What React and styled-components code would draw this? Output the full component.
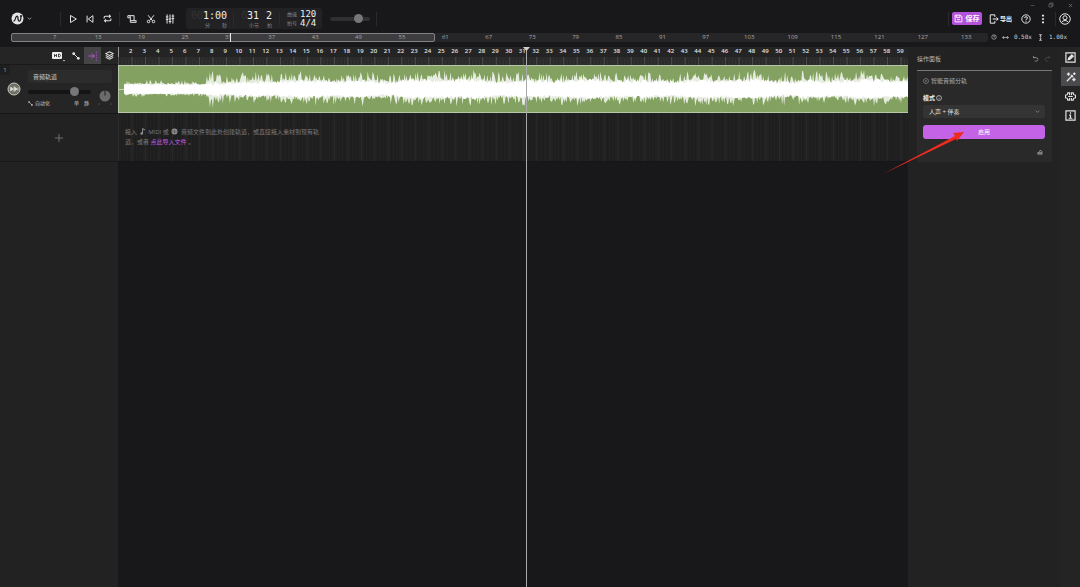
import React from "react";
import styled, { createGlobalStyle } from "styled-components";

const GlobalStyle = createGlobalStyle`
    * {
        box-sizing: border-box;
    }

    body {
        margin: 0;
        background: #18181a;
        color: #d8d8d8;
        font-family: "Open Sans", "Noto Sans CJK SC", sans-serif;
        font-size: 6px;
        line-height: 10px;
    }

    button, input, select {
        margin: 0;
        padding: 0;
        border: 0;
        background: none;
        color: inherit;
        font: inherit;
    }

    svg {
        display: block;
        flex: none;
    }
`;

const Page = styled.div`
    min-height: 100vh;
    display: flex;
    flex-direction: column;
    overflow: hidden;
`;

const TopBar = styled.header`
    height: 47px;
    flex: none;
`;

const WindowBar = styled.div`
    height: 8px;
    display: flex;
    justify-content: flex-end;
    gap: 9px;
    padding: 0 5px;
`;

const IconButton = styled.button`
    width: ${(props) => props.$width || 10}px;
    height: ${(props) => props.$height || 10}px;
    display: flex;
    flex: none;
    align-items: center;
    justify-content: center;
    color: ${(props) => props.$color || "#e4e4e4"};
    background: ${(props) => props.$bg || "none"};
`;

const Toolbar = styled.div`
    height: 21px;
    display: flex;
    align-items: center;
    justify-content: space-between;
    padding: 0 9px 0 11px;
`;

const Group = styled.div`
    display: flex;
    align-items: center;
    gap: ${(props) => props.$gap || 0}px;
    padding-left: ${(props) => props.$left || 0}px;
`;

const Divider = styled.span`
    width: 1px;
    height: 14px;
    background: #2b2b2d;
`;

const Readout = styled.div`
    height: 21px;
    display: flex;
    align-items: center;
    margin-left: 11px;
    padding: 0 5px;
    border-radius: 3px;
    background: #222224;
`;

const Time = styled.div`
    width: ${(props) => props.$width}px;
    display: flex;
    flex-direction: column;
    color: #f0f0f0;
    font-family: "DejaVu Sans Mono", monospace;
    font-size: 10px;
    line-height: 11px;
    text-align: right;

    i {
        color: #343436;
        font-style: normal;
    }
`;

const Units = styled.div`
    display: flex;
    justify-content: flex-end;
    gap: ${(props) => props.$gap || 0}px;
    color: #8a8a8c;
    font-family: "Noto Sans CJK SC", sans-serif;
    font-size: 5px;
    line-height: 7px;
`;

const Meter = styled.div`
    display: grid;
    grid-template-columns: 10px 17px;
    column-gap: 3px;
    align-items: center;
    color: #f0f0f0;
    font-family: "DejaVu Sans Mono", "Noto Sans CJK SC", monospace;
    font-size: 9px;
    line-height: 9px;

    span {
        color: #8a8a8c;
        font-size: 5px;
    }
`;

const Slider = styled.input.attrs({ type: "range" })`
    width: ${(props) => props.$width}px;
    height: 10px;
    display: block;
    flex: none;
    appearance: none;

    &::-webkit-slider-runnable-track {
        height: 4px;
        border-radius: 2px;
        background: ${(props) => props.$track || "#303032"};
    }

    &::-webkit-slider-thumb {
        width: 9px;
        height: 9px;
        margin-top: -3px;
        appearance: none;
        border-radius: 50%;
        background: #777779;
    }
`;

const SaveButton = styled.button`
    width: 30px;
    height: 13px;
    display: flex;
    align-items: center;
    justify-content: center;
    gap: 2px;
    border-radius: 2px;
    background: #b552dc;
    color: #fff;
    font-size: 7px;
    font-weight: 700;
`;

const ExportButton = styled.button`
    display: flex;
    align-items: center;
    gap: 1px;
    color: #f0f0f0;
    font-size: 6px;
    font-weight: 700;
`;

const OverviewRow = styled.div`
    display: flex;
    align-items: center;
    padding: 3px 13px 0 11px;
`;

const Overview = styled.div`
    position: relative;
    height: 9px;
    flex: 1;
    display: flex;
    padding-left: 22px;
    border-radius: 2px;
    background: #262628;
    color: #a6a6a8;
    line-height: 9px;

    span {
        position: relative;
        flex: 1;
        text-align: center;
    }
`;

const ViewRange = styled.div`
    position: absolute;
    inset: 0 auto 0 0;
    width: 43.4%;
    border: 1px solid #838385;
    border-radius: 2px;
    background: #3d3d3f;
`;

const OverviewMark = styled.div`
    position: absolute;
    top: 0;
    bottom: 0;
    left: 22.4%;
    width: 1px;
    background: #e8e8e8;
`;

const Scale = styled.div`
    display: flex;
    align-items: center;
    gap: 5px;
    padding-left: 3px;
    color: #d0d0d2;
    font-family: "DejaVu Sans Mono", monospace;
`;

const Workspace = styled.main`
    flex: 1;
    display: flex;
`;

const Tracks = styled.aside`
    width: 118px;
    flex: none;
    background: #222222;
`;

const TrackTools = styled.div`
    height: 18px;
    display: flex;
    align-items: center;
    justify-content: flex-end;
    border-bottom: 1px solid #191919;
    background: #252526;
`;

const Track = styled.div`
    height: 49px;
    display: flex;
    border-bottom: 1px solid #171717;
    background: #252525;
`;

const TrackIndex = styled.div`
    width: 28px;
    display: flex;
    flex-direction: column;
    gap: 7px;
    color: #a0a0a0;

    span {
        width: 10px;
        text-align: center;
        background: #1f1f1f;
    }

    svg {
        margin-left: 7px;
    }
`;

const TrackBody = styled.div`
    flex: 1;
    padding: 5px 6px 0 0;
`;

const TrackName = styled.input`
    width: 100%;
    height: 13px;
    display: block;
    padding: 0 5px;
    border-radius: 2px;
    background: #2c2c2c;
    color: #d0d0d0;
`;

const TrackControls = styled.div`
    display: flex;
    justify-content: space-between;
    padding-top: 4px;
`;

const Mixer = styled.div`
    width: 63px;
`;

const TrackFlags = styled.div`
    display: flex;
    align-items: center;
    padding-top: 1px;
    color: #c4c4c4;
    font-size: 5px;

    button {
        display: flex;
        align-items: center;
        gap: 2px;
        margin-right: 5px;
    }

    button:first-child {
        margin-right: auto;
    }

    button:last-child {
        margin-right: 2px;
    }
`;

const AddTrack = styled.button`
    width: 100%;
    height: 48px;
    display: flex;
    align-items: center;
    justify-content: center;
    border-bottom: 1px solid #191919;
    color: #7c7c7c;
`;

const Timeline = styled.section`
    position: relative;
    flex: 1;
    min-width: 0;
    background: #18181a;
`;

const Ruler = styled.div`
    height: 18px;
    background: #2b2b2c;
`;

const RulerLabels = styled.div`
    height: 10px;
    display: flex;
    padding: 0 1px 0 5px;
    border-left: 1px solid #98989a;
    color: #e2e2e2;
    font-weight: 600;
    line-height: 9px;
    background: #242425;

    span {
        width: 0;
        flex: 1;
        display: flex;
        justify-content: center;
    }
`;

const Clip = styled.div`
    height: 48px;
    border: 1px solid #b9c7a9;
    border-width: 1px 0 1px 1px;
    background: #83a160;
`;

const Lane = styled.div`
    position: relative;
    height: 49px;
    border-bottom: 1px solid #151516;
    background: #212122;

    > svg {
        position: absolute;
        inset: 0;
    }
`;

const Hint = styled.p`
    position: relative;
    margin: 0;
    padding: 14px 7px 0;
    color: #7c7c7e;

    svg {
        display: inline-block;
        margin: 0 1px;
        vertical-align: -1px;
    }

    a {
        color: #c05ce6;
        text-decoration: none;
    }
`;

const Playhead = styled.div`
    position: absolute;
    top: 0;
    bottom: 0;
    left: 51.6%;
    width: 1px;
    background: #a9a9ab;

    svg {
        position: absolute;
        top: 0;
        left: -3px;
    }
`;

const Panel = styled.aside`
    width: 152px;
    flex: none;
    padding: 0 8px 0 9px;
    background: #222223;
`;

const PanelHeader = styled.div`
    height: 24px;
    display: flex;
    align-items: center;
    gap: 2px;
    border-bottom: 1px solid #777777;
    color: #b5b5b5;

    h2 {
        margin: 0 auto 0 0;
        font-size: 6px;
        font-weight: 400;
    }
`;

const Card = styled.div`
    height: 91px;
    display: flex;
    flex-direction: column;
    padding: 5px 7px 5px 6px;
    background: #292929;
`;

const CardTitle = styled.h3`
    display: flex;
    align-items: center;
    gap: 2px;
    margin: 0 0 7px;
    color: #b0b0b0;
    font-size: 6px;
    font-weight: 400;
`;

const FieldLabel = styled.label`
    display: flex;
    align-items: center;
    gap: 1px;
    color: #f0f0f0;
    font-weight: 700;
`;

const SelectBox = styled.div`
    display: flex;
    align-items: center;
    height: 13px;
    margin: 2px 0 7px;
    padding: 0 5px 0 6px;
    border-radius: 3px;
    background: #343434;

    select {
        flex: 1;
        appearance: none;
        color: #e2e2e2;
    }
`;

const EnableButton = styled.button`
    position: relative;
    height: 14px;
    border-radius: 3px;
    background: #c463e6;
    color: #fff;

    svg {
        position: absolute;
        top: 6px;
        left: -40px;
        pointer-events: none;
    }
`;

const CardFooter = styled.div`
    display: flex;
    justify-content: flex-end;
    margin-top: auto;
`;

const Rail = styled.nav`
    width: 20px;
    display: flex;
    flex: none;
    flex-direction: column;
    padding-left: 1px;
    background: #242425;
`;

const ICONS = {
    play: <path d="M6 3.5v17L20 12z" />,
    start: <path d="M5 4v16M19 4v16L8 12z" />,
    loop: <path d="M3 12V9q0-3 3-3h14M16 2l4 4-4 4M21 12v3q0 3-3 3H4M8 14l-4 4 4 4" />,
    scroll: <path d="M8 17V7q0-3-3-3H2v5h5M5 4h12v12M8 17v3h14v-4H8" />,
    scissors: (
        <path d="M8.5 16 19 3M15.5 16 5 3M9 18a3 3 0 1 1-6 0 3 3 0 0 1 6 0M21 18a3 3 0 1 1-6 0 3 3 0 0 1 6 0" />
    ),
    faders: <path d="M5 1v6M5 13v10M12 1v11M12 18v5M19 1v4M19 11v12M2 7h6M2 13h6M9 12h6M9 18h6M16 5h6M16 11h6M5 7v6M12 12v6M19 5v6" />,
    chevron: <path d="m4 8 8 8 8-8" />,
    save: <path d="M3 3h14l4 4v14H3zM7 3v6h9V3M8 15h8" />,
    export: <path d="M14 7V2H3v20h11v-5M9 12h13M18 8l4 4-4 4" />,
    help: (
        <path d="M22 12a10 10 0 1 1-20 0 10 10 0 0 1 20 0M8.5 9.5q0-3 3.5-3t3.5 3q0 2-3.5 3.5v1M12 16v2.5" />
    ),
    user: (
        <path d="M22.5 12a10.500 10.500 0 1 1-21 0 10.500 10.500 0 0 1 21 0M16 9.5a4 4 0 1 1-8 0 4 4 0 0 1 8 0M5 19q2-4 7-4t7 4" />
    ),
    more: <path d="M12 2v4M12 10v4M12 18v4" />,
    minus: <path d="M3 12h18" />,
    restore: <path d="M4 8h12v12H4zM8 8V4h12v12h-4" />,
    close: <path d="m4 4 16 16M20 4 4 20" />,
    clock: <path d="M21 12a9 9 0 1 1-18 0 9 9 0 0 1 18 0M12 6v6h4" />,
    horizontal: <path d="M2 12h20M7 7l-5 5 5 5M17 7l5 5-5 5" />,
    vertical: <path d="M7 2h10M7 22h10M12 3v18M9 8l3-4 3 4M9 16l3 4 3-4" />,
    snap: <path d="M1 12h14M9 6l6 6-6 6M20 2v3M20 8v3M20 14v3M20 20v3" />,
    layers: <path d="m12 2 10 5-10 5L2 7zM2 12l10 5 10-5M2 17l10 5 10-5" />,
    undo: <path d="M5 3v6h6M5 9h9q6 0 6 6t-6 6H9" />,
    redo: <path d="M19 3v6h-6M19 9h-9q-6 0-6 6t6 6h3" />,
    record: <path d="M22 12a10 10 0 1 1-20 0 10 10 0 0 1 20 0M14 12a2 2 0 1 1-4 0 2 2 0 0 1 4 0" />,
    info: <path d="M22 12a10 10 0 1 1-20 0 10 10 0 0 1 20 0M12 6v2M12 11v7" />,
    plus: <path d="M12 2v20M2 12h20" />,
    eraser: <path d="M2 20h20M3 14h17v6H3zM8 14l4-9 8 4v5" />,
    edit: (
        <>
            <path d="M2 2h20v20H2z" />
            <path d="m7 17 1-4 7-7 3 3-7 7z" fill="currentColor" />
        </>
    ),
    wand: <path d="M2 22 16 8M12 7l5 5M6 1v8M2 5h8M19 14v8M15 18h8M20 1v6M17 4h6" />,
    plugin: <path d="M10 9V4H6L5 8l-4 1v6l4 1 1 4h4v-5M14 9V4h4l1 4 4 1v6l-4 1-1 4h-4v-5M7 12h10" />,
    infoBox: <path d="M2 2h20v20H2zM9 11h3v7M8 18h8M12 5v3" />,
};

const Icon = ({ name, size = 10, weight = 2.4 }) => (
    <svg
        width={size}
        height={size}
        viewBox="0 0 24 24"
        fill="none"
        stroke="currentColor"
        strokeWidth={weight}
        aria-hidden="true"
    >
        {ICONS[name]}
    </svg>
);

const Nodes = ({ size = 8 }) => (
    <svg width={size} height={size} viewBox="0 0 8 8" fill="currentColor">
        <path d="M1.5 1.5 6.5 6.5" stroke="currentColor" />
        <circle cx="1.7" cy="1.7" r="1.4" />
        <circle cx="6.3" cy="6.3" r="1.4" />
    </svg>
);

const Logo = () => (
    <svg width="13" height="13" viewBox="0 0 26 26">
        <circle cx="13" cy="13" r="12" fill="#e4e4e4" />
        <path
            d="M5 18q3 0 4-5t3-5 2 5 3 5 3-10"
            fill="none"
            stroke="#18181a"
            strokeWidth="2.5"
        />
        <circle cx="20" cy="8" r="2" fill="#18181a" />
    </svg>
);

const overviewBars = Array.from({ length: 22 }, (_, i) => 7 + i * 6);
const bars = Array.from({ length: 58 }, (_, i) => i + 2);

// Small seeded generator, so the wave form is the same on every render
const makeRandom = (seed) => () => {
    seed = (seed * 16807) % 2147483647;
    return seed / 2147483647;
};

const wavePath = (seed, spiky) => {
    const random = makeRandom(seed);
    const top = [];
    const bottom = [];

    for (let x = 5; x <= 790; x += 1) {
        const quiet = x < 88;
        const grow = Math.min(1, Math.max(0, (x - 88) / 160));
        const swell = Math.sin(x / 9) * 0.6 + Math.sin(x / 23) * 0.6;
        const core = quiet ? 3.6 : 4.2 + grow * 1.6 + swell * (0.4 + grow * 0.6);
        let reach = core + random() * (quiet ? 1.8 : 4);
        let low = core + random() * (quiet ? 1.4 : 3);

        if (spiky) {
            reach += Math.pow(random(), 2.5) * (quiet ? 4 : 10);
            low += Math.pow(random(), 2.5) * (quiet ? 3 : 9);
            if (x > 89 && x < 102) {
                reach += random() * 5;
                low += random() * 8;
            }
        }
        top.push(`${x} ${(23 - reach).toFixed(1)}`);
        bottom.unshift(`${x} ${(23.5 + low).toFixed(1)}`);
    }
    return `M${top.join("L")}L${bottom.join("L")}Z`;
};

const Waveform = () => (
    <svg width="100%" height="46" viewBox="0 0 790 46" preserveAspectRatio="none">
        <path d="M0 23.5H6" stroke="#c6d3b7" />
        <path d={wavePath(71, true)} fill="#fff" opacity="0.8" />
        <path d={wavePath(913, false)} fill="#fff" />
    </svg>
);

// Bar lines with three beat lines between each pair
const Grid = ({ height, bar, beat, beatTop = 0, barTop = 0 }) => {
    const lines = Array.from({ length: 235 }, (_, i) => i);
    return (
        <svg width="100%" height={height} viewBox={`0 0 790 ${height}`} preserveAspectRatio="none">
            {lines.map((i) => (
                <path
                    key={i}
                    d={`M${0.5 + i * 3.373} ${i % 4 ? beatTop : barTop}V${height}`}
                    stroke={i % 4 ? beat : bar}
                />
            ))}
        </svg>
    );
};

const Header = () => (
    <TopBar>
        <WindowBar>
            <IconButton aria-label="最小化" $color="#7e7e80"><Icon name="minus" size={5} /></IconButton>
            <IconButton aria-label="还原" $color="#7e7e80"><Icon name="restore" size={6} /></IconButton>
            <IconButton aria-label="关闭" $color="#9a9a9c"><Icon name="close" size={5} /></IconButton>
        </WindowBar>
        <Toolbar>
            <Group>
                <Logo />
                <IconButton aria-label="菜单"><Icon name="chevron" size={5} weight={3} /></IconButton>
                <Group $left={26} $gap={7}>
                    <Divider />
                    <IconButton aria-label="播放"><Icon name="play" /></IconButton>
                    <IconButton aria-label="回到开头"><Icon name="start" /></IconButton>
                    <IconButton aria-label="循环"><Icon name="loop" size={9} weight={2.8} /></IconButton>
                    <Divider />
                </Group>
                <Group $left={7} $gap={9}>
                    <IconButton aria-label="卷动"><Icon name="scroll" /></IconButton>
                    <IconButton aria-label="剪切"><Icon name="scissors" /></IconButton>
                    <IconButton aria-label="混音台"><Icon name="faders" /></IconButton>
                </Group>
                <Readout>
                    <Time $width={36}>
                        <div><i>00</i>1:00</div>
                        <Units $gap={12}><span>分</span><span>秒</span></Units>
                    </Time>
                    <Group $left={6} $gap={7}>
                        <Divider />
                        <Time $width={18}>
                            <div><i>0</i>31</div>
                            <Units>小节</Units>
                        </Time>
                        <Time $width={6}>
                            <div>2</div>
                            <Units>拍</Units>
                        </Time>
                        <Divider />
                        <Meter>
                            <span>曲速</span>120
                            <span>拍号</span>4/4
                        </Meter>
                    </Group>
                </Readout>
                <Group $left={8} $gap={6}>
                    <Slider aria-label="主音量" defaultValue="78" $width={40} />
                    <Divider />
                </Group>
            </Group>
            <Group $gap={9}>
                <Group $gap={7}>
                    <Group $gap={3}>
                        <Divider />
                        <SaveButton><Icon name="save" size={9} />保存</SaveButton>
                    </Group>
                    <ExportButton><Icon name="export" />导出</ExportButton>
                </Group>
                <Group $gap={7}>
                    <IconButton aria-label="帮助"><Icon name="help" /></IconButton>
                    <IconButton aria-label="更多"><Icon name="more" weight={5} /></IconButton>
                    <Group $gap={3}>
                        <Divider />
                        <IconButton aria-label="账户" $width={12}><Icon name="user" size={12} weight={2} /></IconButton>
                    </Group>
                </Group>
            </Group>
        </Toolbar>
        <OverviewRow>
            <Overview>
                <ViewRange />
                {overviewBars.map((bar) => <span key={bar}>{bar}</span>)}
                <OverviewMark />
            </Overview>
            <Scale>
                <Icon name="clock" size={6} />
                <Icon name="horizontal" size={7} />
                0.50x
                <Icon name="vertical" size={7} />
                1.00x
            </Scale>
        </OverviewRow>
    </TopBar>
);

const TrackList = () => (
    <Tracks>
        <TrackTools>
            <IconButton aria-label="高清显示" $width={17} $height={17}>
                <svg width="13" height="12" viewBox="0 0 13 12">
                    <rect y="2" width="10" height="7" rx="1" fill="#eeeeee" />
                    <path d="M2.5 4v3M4.5 4v3M2.5 5.5h2M6.5 4v3h1l1-1.5-1-1.5z" fill="none" stroke="#252526" strokeWidth="0.8" />
                    <path d="M11 10h2l-1 1.500z" fill="#eeeeee" />
                </svg>
            </IconButton>
            <IconButton aria-label="自动化" $width={17} $height={17}><Nodes /></IconButton>
            <IconButton aria-label="吸附" $width={17} $height={17} $bg="#454547" $color="#b552dc">
                <Icon name="snap" />
            </IconButton>
            <IconButton aria-label="图层" $width={17} $height={17}><Icon name="layers" size={9} weight={2.8} /></IconButton>
        </TrackTools>
        <Track>
            <TrackIndex>
                <span>1</span>
                <svg width="14" height="14" viewBox="0 0 14 14">
                    <circle cx="7" cy="7" r="6" fill="#6d7163" stroke="#c8cac2" />
                    <path d="M3.5 5v4l3-2zM7.5 5v4l3-2zM7 4v6M11 5.5v3" fill="#dededa" stroke="#dededa" strokeWidth="0.6" />
                </svg>
            </TrackIndex>
            <TrackBody>
                <TrackName aria-label="轨道名称" defaultValue="音频轨道" />
                <TrackControls>
                    <Mixer>
                        <Slider aria-label="轨道音量" defaultValue="78" $width={63} $track="#151515" />
                        <TrackFlags>
                            <button><Nodes size={5} />自动化</button>
                            <button>单</button>
                            <button>静</button>
                        </TrackFlags>
                    </Mixer>
                    <svg width="14" height="18" viewBox="0 0 14 18">
                        <circle cx="7" cy="9" r="5.5" fill="#6b6b6b" />
                        <path d="M7 3.5v5" stroke="#202020" />
                        <path d="M0 17h2M12 17h2" stroke="#4d4d4d" />
                    </svg>
                </TrackControls>
            </TrackBody>
        </Track>
        <AddTrack aria-label="添加轨道"><Icon name="plus" weight={2} /></AddTrack>
    </Tracks>
);

const Arrangement = () => (
    <Timeline>
        <Ruler>
            <RulerLabels>
                {bars.map((bar) => <span key={bar}>{bar}</span>)}
            </RulerLabels>
            <Grid height={8} bar="#505052" beat="#363638" beatTop={3} />
        </Ruler>
        <Clip><Waveform /></Clip>
        <Lane>
            <Grid height={48} bar="#2a2a2b" beat="#1e1e1f" />
            <Hint>
                拖入{" "}
                <svg width="6" height="7" viewBox="0 0 6 7">
                    <circle cx="1.7" cy="5.5" r="1.3" fill="#949496" />
                    <path d="M2.6 5.5V.5L5 2" fill="none" stroke="#949496" />
                </svg>{" "}
                MIDI 或{" "}
                <svg width="7" height="7" viewBox="0 0 7 7">
                    <circle cx="3.5" cy="3.5" r="3" fill="#949496" />
                    <path d="M2 2.5v2M3.5 1.5v4M5 2.5v2" stroke="#303031" strokeWidth="0.6" />
                </svg>{" "}
                音频文件到此处创建轨道，或直接拖入素材到现有轨
                <br />
                道，或者 <a href="#import">点此导入文件</a> 。
            </Hint>
        </Lane>
        <Playhead>
            <svg width="7" height="5" viewBox="0 0 7 5">
                <path d="M0 0h7L3.5 4z" fill="#d0d0d0" />
            </svg>
        </Playhead>
    </Timeline>
);

const Operations = () => (
    <Panel>
        <PanelHeader>
            <h2>操作面板</h2>
            <IconButton aria-label="撤销" $color="#a4a4a4"><Icon name="undo" size={7} /></IconButton>
            <IconButton aria-label="重做" $color="#505050"><Icon name="redo" size={7} /></IconButton>
        </PanelHeader>
        <Card>
            <CardTitle><Icon name="record" size={6} weight={2} />智能音频分轨</CardTitle>
            <FieldLabel htmlFor="mode">模式 <Icon name="info" size={6} /></FieldLabel>
            <SelectBox>
                <select id="mode" defaultValue="vocal">
                    <option value="vocal">人声 + 伴奏</option>
                </select>
                <Icon name="chevron" size={5} weight={2} />
            </SelectBox>
            <EnableButton>
                启用
                <svg width="82" height="44" viewBox="0 0 82 44">
                    <path d="M0 43 72 5 70 2 81 1 74 10 73 8Z" fill="#ef2b20" />
                </svg>
            </EnableButton>
            <CardFooter>
                <IconButton aria-label="清除" $color="#b4b4b4"><Icon name="eraser" size={6} /></IconButton>
            </CardFooter>
        </Card>
    </Panel>
);

const App = () => (
    <Page>
        <GlobalStyle />
        <Header />
        <Workspace>
            <TrackList />
            <Arrangement />
            <Operations />
            <Rail>
                <IconButton aria-label="编辑" $width={19} $height={20}><Icon name="edit" size={11} weight={2.6} /></IconButton>
                <IconButton aria-label="智能工具" $width={19} $height={19} $bg="#4a4a4c"><Icon name="wand" weight={3.2} /></IconButton>
                <IconButton aria-label="插件" $width={19} $height={20}><Icon name="plugin" size={11} /></IconButton>
                <IconButton aria-label="信息" $width={19} $height={18}><Icon name="infoBox" size={11} weight={2.6} /></IconButton>
            </Rail>
        </Workspace>
    </Page>
);

export default App;
